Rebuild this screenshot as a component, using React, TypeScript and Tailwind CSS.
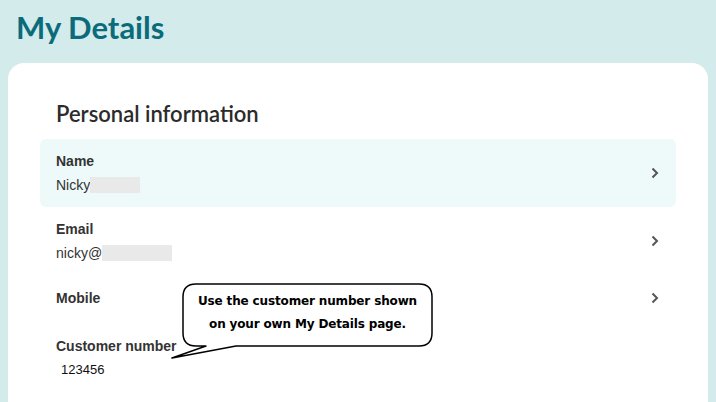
import React from "react";

function Chevron() {
  return (
    <svg width="10" height="14" viewBox="0 0 10 14" className="shrink-0">
      <path d="M2.5 2.5 L7 7 L2.5 11.5" fill="none" stroke="#555" strokeWidth="2" />
    </svg>
  );
}

function Row({ label, value, hi, children, tall = true }: { label: string; value?: React.ReactNode; hi?: boolean; children?: React.ReactNode; tall?: boolean }) {
  return (
    <div className={`flex items-center justify-between rounded-[6px] px-4 ${tall ? "h-[68px]" : "h-[46px]"} ${hi ? "bg-[#eefafa]" : ""}`}>
      <div className="flex flex-col gap-1">
        <div className="text-[14px] leading-5 font-bold text-[#333]">{label}</div>
        {value !== undefined && <div className="text-[14px] leading-5 text-[#333] flex items-center">{value}</div>}
      </div>
      {children}
    </div>
  );
}

export default function App() {
  return (
    <div className="relative w-[716px] h-[402px] overflow-hidden bg-[#d3ebeb]" style={{ fontFamily: '"Liberation Sans", Arial, sans-serif' }}>
      <div className="h-[63px] pl-4 pt-[7px]">
        <h1 className="text-[31px] leading-[40px] font-bold text-[#0b6b7b]" style={{ fontFamily: 'Lato, sans-serif' }}>My Details</h1>
      </div>
      <div className="ml-2 mr-2 rounded-[16px] bg-white px-8 pt-[37px] h-[400px]">
        <h2 className="pl-4 text-[22px] leading-[28px] text-[#2b2b2b] mb-[11px]" style={{ fontFamily: 'Lato, sans-serif', fontWeight: 600 }}>Personal information</h2>
        <Row label="Name" hi value={<><span>Nicky</span><span className="inline-block w-[50px] h-[16px] bg-[#e9e9e9]" /></>}>
          <Chevron />
        </Row>
        <Row label="Email" value={<><span>nicky@</span><span className="inline-block w-[70px] h-[16px] bg-[#e9e9e9]" /></>}>
          <Chevron />
        </Row>
        <Row label="Mobile" tall={false}>
          <Chevron />
        </Row>
        <div className="px-4 pt-[15px]">
          <div className="text-[14px] leading-5 font-bold text-[#333]">Customer number</div>
          <div className="text-[13px] leading-5 text-[#111] mt-1 pl-[5px]">123456</div>
        </div>
      </div>

      <div className="absolute left-[182px] top-[283px] w-[251px] h-[64px]">
        <svg className="absolute left-0 top-0" width="251" height="90" viewBox="0 0 251 90" overflow="visible">
          <path
            d="M14 1 H237 Q250 1 250 14 V50 Q250 63 237 63 H54 L-10 75 L24 63 H14 Q1 63 1 50 V14 Q1 1 14 1 Z"
            fill="white"
            stroke="#000"
            strokeWidth="1.5"
            strokeLinejoin="round"
          />
        </svg>
        <div className="relative flex flex-col items-center pt-[7px] text-center text-[12px] leading-[23px] font-bold text-black tracking-[-0.15px]" style={{ fontFamily: '"DejaVu Sans", Verdana, sans-serif' }}>
          <div>Use the customer number shown</div>
          <div>on your own My Details page.</div>
        </div>
      </div>
    </div>
  );
}
